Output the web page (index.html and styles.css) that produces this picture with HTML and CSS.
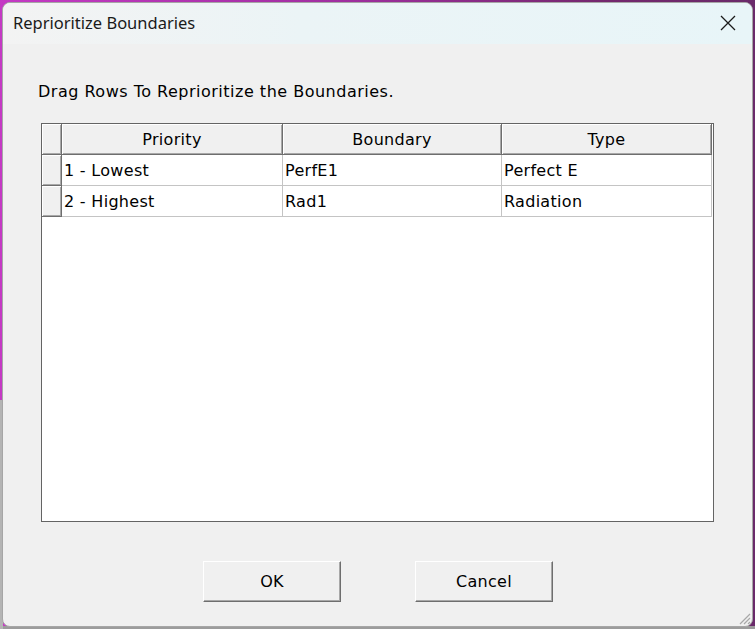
FILE: index.html
```html
<!DOCTYPE html>
<html>
<head>
<meta charset="utf-8">
<title>Reprioritize Boundaries</title>
<link rel="stylesheet" href="styles.css">
</head>
<body>
<div class="window">
  <div class="titlebar">
    <span class="title">Reprioritize Boundaries</span>
    <svg class="close" width="16" height="16" viewBox="0 0 16 16"><path d="M1 1 L15 15 M15 1 L1 15" stroke="#1a1a1a" stroke-width="1.3" fill="none"/></svg>
  </div>
  <div class="content">
    <div class="label">Drag Rows To Reprioritize the Boundaries.</div>
    <div class="grid">
      <div class="table">
        <div class="hc"></div>
        <div class="hc">Priority</div>
        <div class="hc">Boundary</div>
        <div class="hc">Type</div>
        <div class="hc"></div>
        <div class="dc">1 - Lowest</div>
        <div class="dc">PerfE1</div>
        <div class="dc">Perfect E</div>
        <div class="hc"></div>
        <div class="dc">2 - Highest</div>
        <div class="dc">Rad1</div>
        <div class="dc">Radiation</div>
      </div>
    </div>
    <div class="buttons">
      <button class="btn">OK</button>
      <button class="btn">Cancel</button>
    </div>
  </div>
  <svg class="grip" width="14" height="14" viewBox="0 0 14 14"><path d="M13 3 L3 13 M13 7 L7 13 M13 11 L11 13" stroke="#a8a8a8" stroke-width="1.2" fill="none"/></svg>
</div>
</body>
</html>
```
FILE: styles.css
```css
html, body {
  margin: 0;
  padding: 0;
}
body {
  width: 755px;
  height: 629px;
  overflow: hidden;
  background:
    linear-gradient(#0000 400px, #b4b4b4 400px) left top / 3px 100% no-repeat,
    linear-gradient(#0000 626px, #9c9c9c 626px),
    linear-gradient(to right, #c43ac4 0%, #a02ea0 45%, #74286e 80%, #6a2a6a 100%);
}
.window {
  position: relative;
  box-sizing: border-box;
  margin: 2px 2px 0 2px;
  width: 751px;
  height: 625px;
  border: 1px solid #a6a6a6;
  border-radius: 8px;
  background: #f0f0f0;
  overflow: hidden;
  display: flex;
  flex-direction: column;
}
.titlebar {
  height: 41px;
  flex: none;
  display: flex;
  align-items: center;
  justify-content: space-between;
  padding: 0 10px 0 10px;
  background: linear-gradient(to right, #f3f3f3, #ebf4f6 40%, #e8f5f8);
}
.title {
  font-family: "Noto Sans", "Open Sans", sans-serif;
  font-size: 16.5px;
  color: #1a1a1a;
  margin-top: -2px;
}
.close {
  margin-right: 6px;
  margin-top: -1px;
}
.content {
  padding: 38px 0 0 38px;
  font-family: "DejaVu Sans", sans-serif;
  font-size: 16px;
  color: #000;
}
.label {
  line-height: 19px;
  height: 19px;
  margin-left: -3px;
  letter-spacing: 0.5px;
}
.grid {
  margin-top: 22px;
  box-sizing: border-box;
  width: 673px;
  height: 399px;
  border: 1px solid #646464;
  background: #fff;
}
.table {
  display: grid;
  grid-template-columns: 20px 221px 219px 210px;
  grid-auto-rows: 31px;
  letter-spacing: 0.3px;
}
.hc {
  box-sizing: border-box;
  background: #f0f0f0;
  border-right: 1px solid #6e6e6e;
  border-bottom: 1px solid #6e6e6e;
  box-shadow: inset 1px 1px #ffffff, inset -1px -1px #a8a8a8;
  display: flex;
  align-items: center;
  justify-content: center;
  padding-top: 1px;
}
.dc {
  box-sizing: border-box;
  border-right: 1px solid #c4c4c4;
  border-bottom: 1px solid #c4c4c4;
  display: flex;
  align-items: center;
  padding-left: 2px;
  padding-top: 1px;
}
.buttons {
  display: flex;
  gap: 74px;
  margin: 39px 0 0 162px;
}
.btn {
  box-sizing: border-box;
  width: 138px;
  height: 41px;
  background: #f0f0f0;
  border: 1px solid;
  border-color: #ffffff #6e6e6e #6e6e6e #ffffff;
  box-shadow: inset -1px -1px #a8a8a8;
  font-family: "DejaVu Sans", sans-serif;
  font-size: 16px;
  letter-spacing: 0.3px;
  color: #000;
  padding: 0;
}
.grip {
  position: absolute;
  right: 1px;
  bottom: 1px;
}
```
